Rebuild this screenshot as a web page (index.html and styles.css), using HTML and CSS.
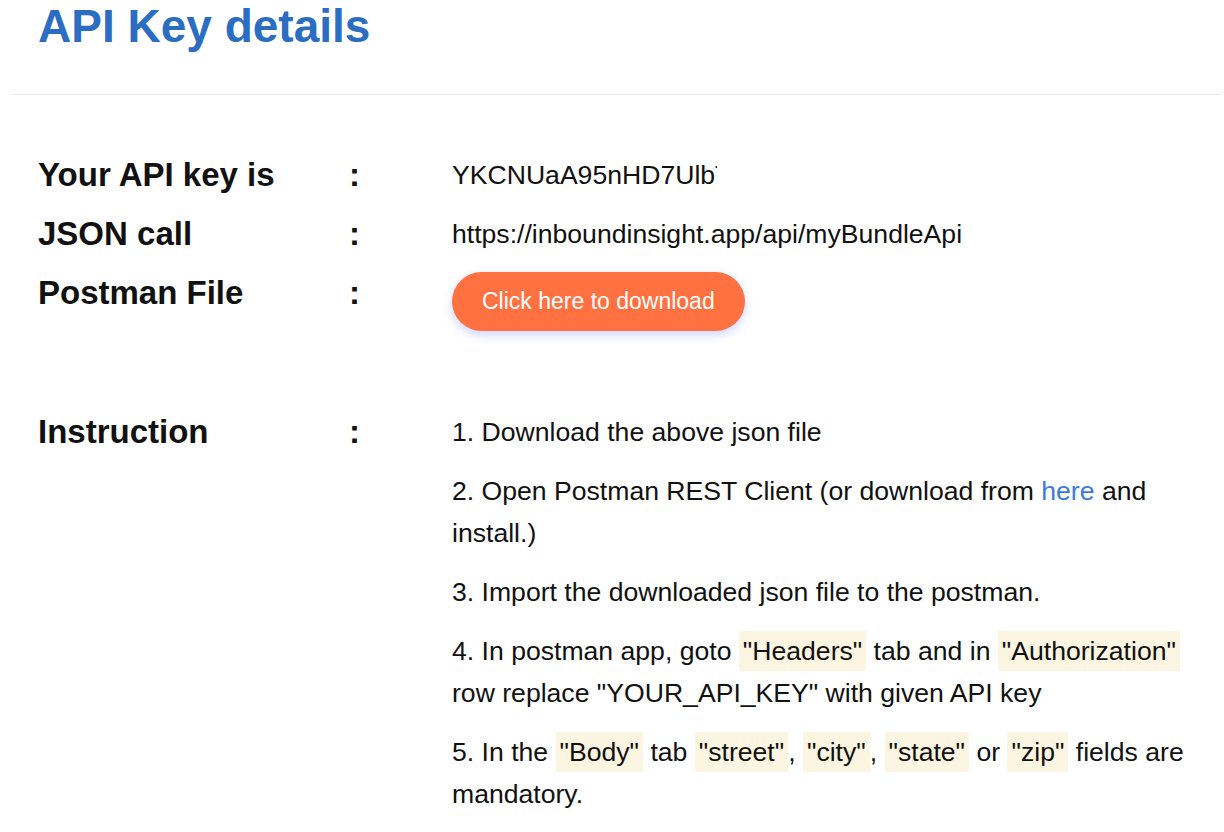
FILE: index.html
```
<!DOCTYPE html>
<html lang="en">
<head>
    <meta charset="UTF-8">
    <meta name="viewport" content="width=device-width, initial-scale=1.0">
    <title>API Key details</title>
    <link rel="stylesheet" href="styles.css">
</head>
<body>
    <div class="page">
        <h1 class="title">API Key details</h1>
        <hr class="divider">

        <div class="details">
            <div class="row">
                <div class="label">Your API key is</div>
                <div class="colon">:</div>
                <div class="value"><span class="api-key">YKCNUaA95nHD7UlbTq3xW</span></div>
            </div>
            <div class="row">
                <div class="label">JSON call</div>
                <div class="colon">:</div>
                <div class="value">https://inboundinsight.app/api/myBundleApi</div>
            </div>
            <div class="row">
                <div class="label">Postman File</div>
                <div class="colon">:</div>
                <div class="value">
                    <button class="download-btn">Click here to download</button>
                </div>
            </div>
            <div class="row row-instruction">
                <div class="label">Instruction</div>
                <div class="colon">:</div>
                <div class="value steps">
                    <p>1. Download the above json file</p>
                    <p>2. Open Postman REST Client (or download from <a href="#">here</a> and install.)</p>
                    <p>3. Import the downloaded json file to the postman.</p>
                    <p>4. In postman app, goto <span class="tag">"Headers"</span> tab and in <span class="tag">"Authorization"</span> row replace "YOUR_API_KEY" with given API key</p>
                    <p>5. In the <span class="tag">"Body"</span> tab <span class="tag">"street"</span>, <span class="tag">"city"</span>, <span class="tag">"state"</span> or <span class="tag">"zip"</span> fields are mandatory.</p>
                </div>
            </div>
        </div>
    </div>
</body>
</html>
```

FILE: styles.css
```
* {
    box-sizing: border-box;
    margin: 0;
    padding: 0;
    font-family: 'Liberation Sans', Arial, sans-serif;
}

body {
    background-color: #fff;
    color: #111;
}

.page {
    padding: 0 2px 0 12px;
}

.title {
    padding-left: 26px;
    font-size: 46px;
    line-height: 53px;
    font-weight: bold;
    color: #2b6dc2;
}

.divider {
    margin-top: 41px;
    border: none;
    border-top: 1px solid #ececec;
}

.details {
    padding: 59px 0 0 26px;
}

.row {
    display: grid;
    grid-template-columns: 311px 103px 745px;
    margin-bottom: 17px;
}

.row-instruction {
    margin-top: 80px;
}

.label,
.colon {
    font-size: 33px;
    line-height: 42px;
    font-weight: bold;
}

.value {
    font-size: 26.6px;
    line-height: 42px;
}

.api-key {
    display: inline-block;
    width: 265px;
    overflow: hidden;
    white-space: nowrap;
    vertical-align: top;
}

.download-btn {
    height: 59px;
    padding: 0 30px;
    background-color: #ff7140;
    color: #fff;
    border: none;
    border-radius: 30px;
    font-size: 23px;
    box-shadow: 0 4px 10px rgba(90, 110, 255, 0.28);
    cursor: pointer;
}

.steps p {
    margin-bottom: 17px;
}

.steps a {
    color: #3a7bd8;
    text-decoration: none;
}

.tag {
    padding: 5px 4px;
    background-color: #fcf5e1;
}
```
